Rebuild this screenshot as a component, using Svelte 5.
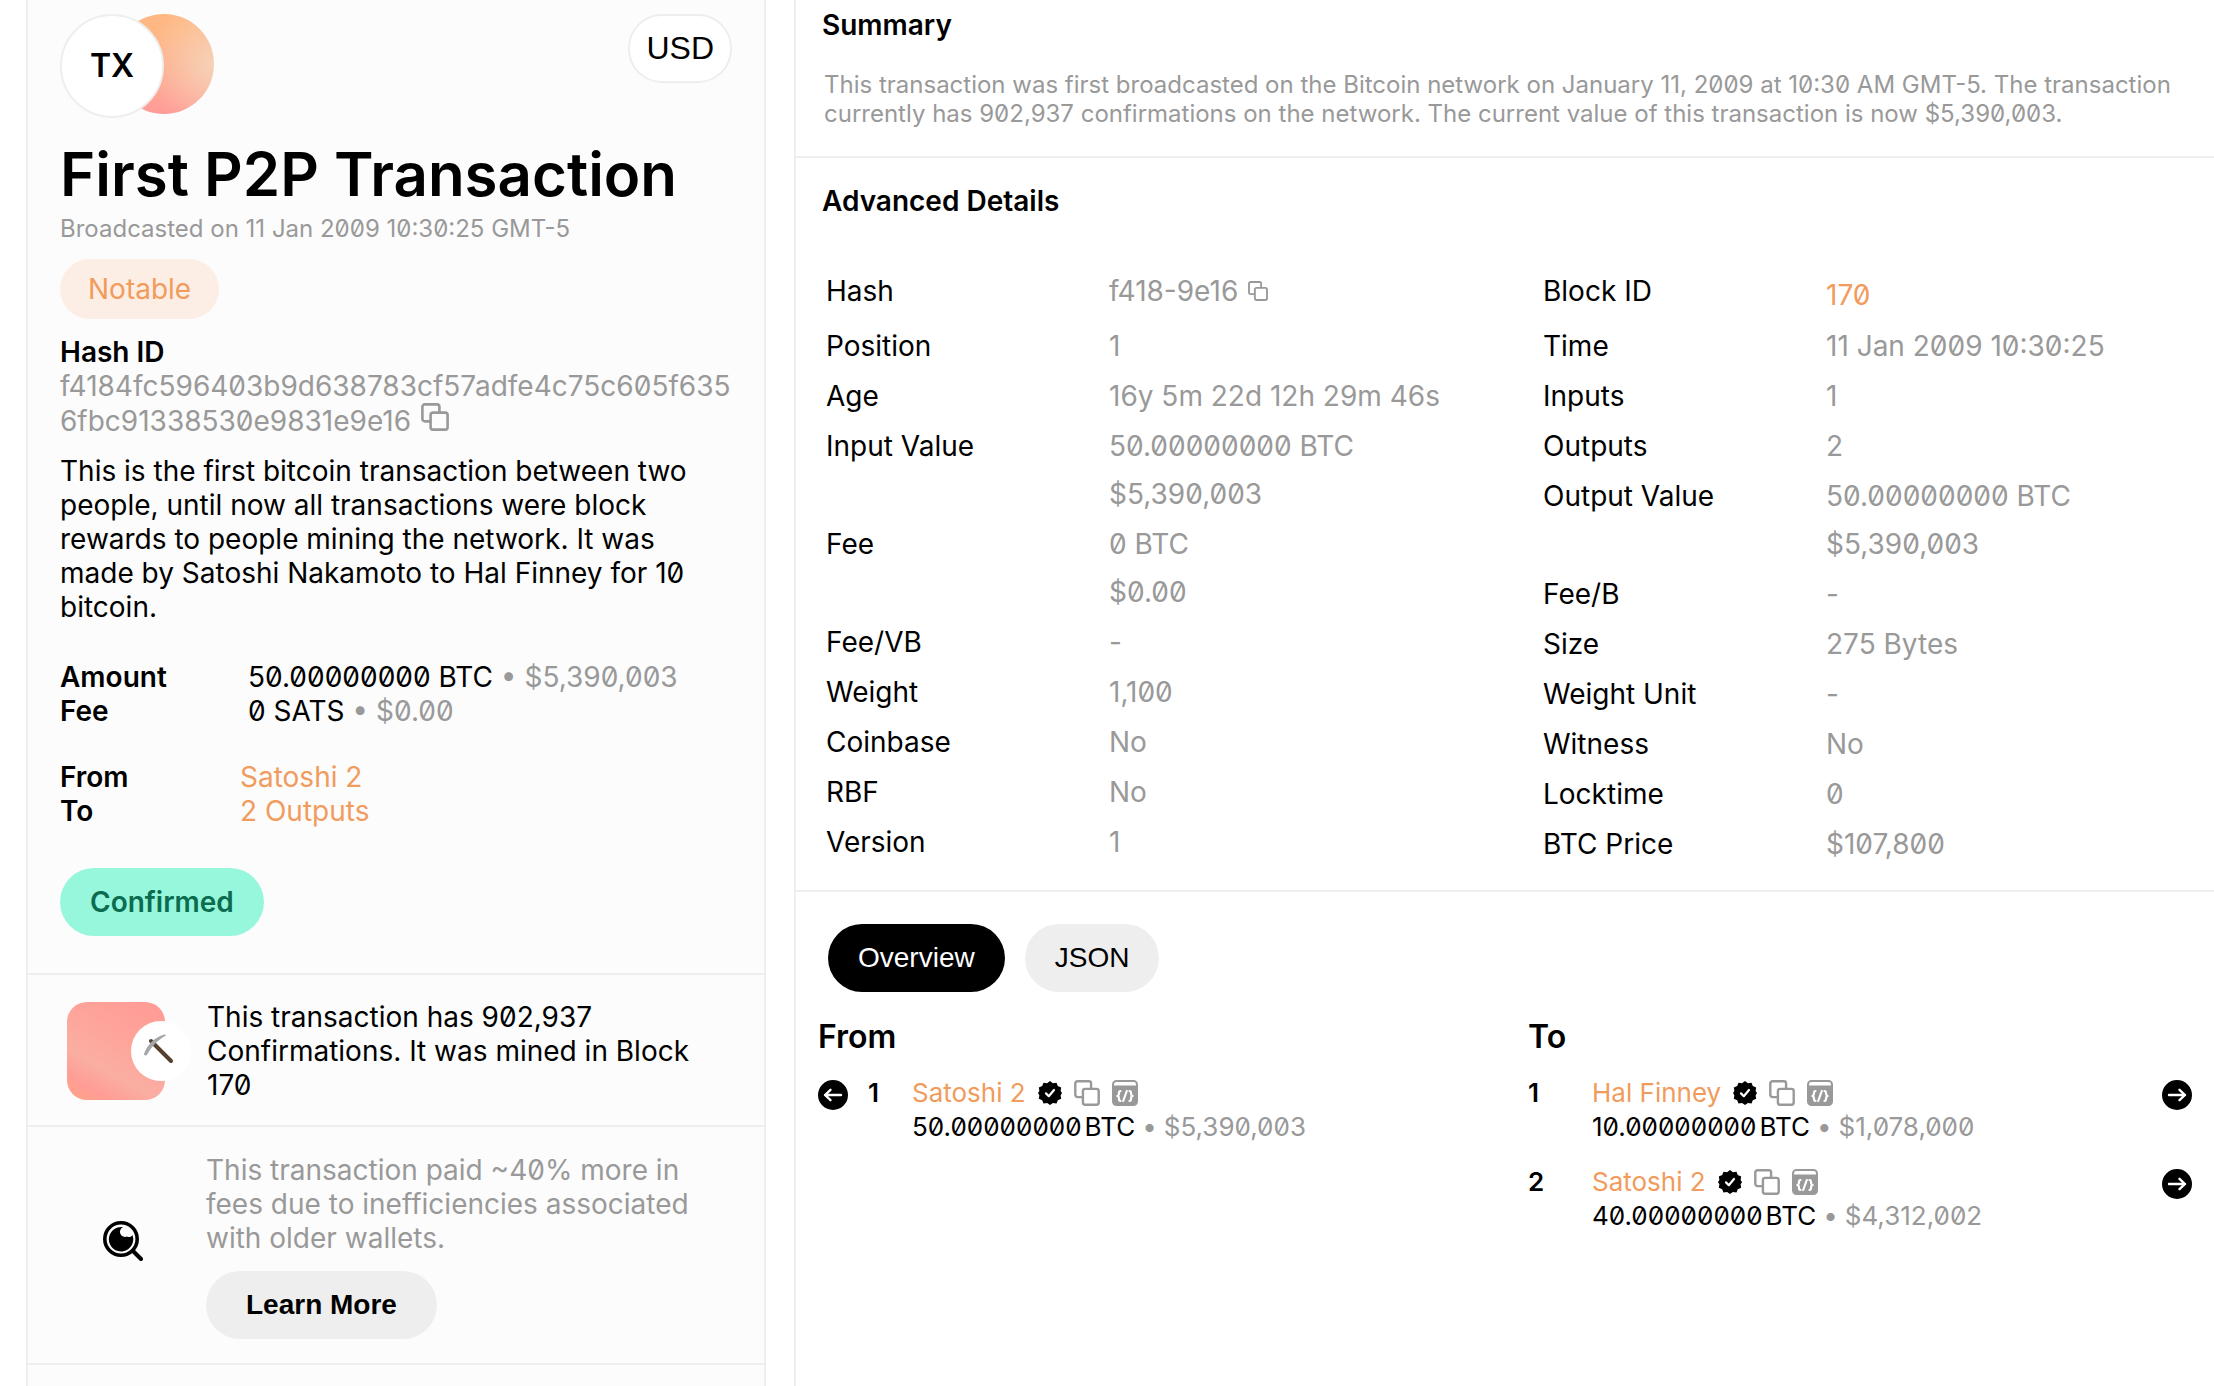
<script>
    let copied = $state('');
    let tab = $state('Overview');

    const hash = 'f4184fc596403b9d638783cf57adfe4c75c605f6356fbc91338530e9831e9e16';

    const leftDetails = [
        { label: 'Hash', values: ['f418-9e16'], copy: true },
        { label: 'Position', values: ['1'] },
        { label: 'Age', values: ['16y 5m 22d 12h 29m 46s'] },
        { label: 'Input Value', values: ['50.00000000 BTC', '$5,390,003'] },
        { label: 'Fee', values: ['0 BTC', '$0.00'] },
        { label: 'Fee/VB', values: ['-'] },
        { label: 'Weight', values: ['1,100'] },
        { label: 'Coinbase', values: ['No'] },
        { label: 'RBF', values: ['No'] },
        { label: 'Version', values: ['1'] }
    ];

    const rightDetails = [
        { label: 'Block ID', values: ['170'], link: true },
        { label: 'Time', values: ['11 Jan 2009 10:30:25'] },
        { label: 'Inputs', values: ['1'] },
        { label: 'Outputs', values: ['2'] },
        { label: 'Output Value', values: ['50.00000000 BTC', '$5,390,003'] },
        { label: 'Fee/B', values: ['-'] },
        { label: 'Size', values: ['275 Bytes'] },
        { label: 'Weight Unit', values: ['-'] },
        { label: 'Witness', values: ['No'] },
        { label: 'Locktime', values: ['0'] },
        { label: 'BTC Price', values: ['$107,800'] }
    ];

    const inputs = [{ name: 'Satoshi 2', btc: '50.00000000', usd: '$5,390,003' }];
    const outputs = [
        { name: 'Hal Finney', btc: '10.00000000', usd: '$1,078,000' },
        { name: 'Satoshi 2', btc: '40.00000000', usd: '$4,312,002' }
    ];

    function copyText(text) {
        navigator.clipboard?.writeText(text);
        copied = text;
    }
</script>

{#snippet copyIcon()}
    <svg class="copy-icon" viewBox="0 0 28 28" fill="none" stroke="currentColor" stroke-width="2.6" stroke-linejoin="round" aria-hidden="true">
        <rect x="9.6" y="9.6" width="17" height="17" rx="2.4" />
        <path d="M9.6 18.4H3.8a2.4 2.4 0 0 1-2.4-2.4V3.8a2.4 2.4 0 0 1 2.4-2.4H16a2.4 2.4 0 0 1 2.4 2.4v5.8" />
    </svg>
{/snippet}

{#snippet arrowIcon(flip)}
    <svg class="arrow-icon" class:flip viewBox="0 0 30 30" aria-hidden="true">
        <circle cx="15" cy="15" r="15" />
        <path d="M7 15h16M17.5 9.8l5.5 5.2-5.5 5.2" fill="none" stroke="#fff" stroke-width="2.4" stroke-linecap="round" stroke-linejoin="round" />
    </svg>
{/snippet}

{#snippet party(item)}
    <div class="party">
        <div class="party-name">
            <a href="#address">{item.name}</a>
            <svg class="badge-icon" viewBox="0 0 24 24" role="img" aria-label="Verified">
                <path d="M12 0l2.9 2.3 3.6-.6 1.3 3.4 3.4 1.3-.6 3.6L24 12l-1.4 2.6.6 3.2-3.4 1.4-1.3 3.3-3.6-.6L12 24l-2.9-2.1-3.6.6-1.3-3.3-3.4-1.4.6-3.2L0 12l1.4-2-.6-3.6 3.4-1.3 1.3-3.4 3.6.6z" />
                <path d="M8 12.4l2.8 2.8L16 9" fill="none" stroke="#fff" stroke-width="2.2" stroke-linecap="round" stroke-linejoin="round" />
            </svg>
            <button class="icon-button" aria-label="Copy address" onclick={() => copyText(item.name)}>{@render copyIcon()}</button>
            <svg class="code-icon" viewBox="0 0 26 26" aria-hidden="true">
                <path fill-rule="evenodd" d="M4.5 0h17A4.5 4.5 0 0 1 26 4.5v17a4.5 4.5 0 0 1-4.5 4.5h-17A4.5 4.5 0 0 1 0 21.5v-17A4.5 4.5 0 0 1 4.5 0zM4.4 2A2.4 2.4 0 0 0 2 4.4V5.5h22V4.4A2.4 2.4 0 0 0 21.6 2z" />
                <path d="M8.5 11q-1.5 0-1.5 2.2 0 2-1.2 2.8 1.2.8 1.2 2.8 0 2.2 1.5 2.2M17.5 11q1.5 0 1.5 2.2 0 2 1.2 2.8-1.2.8-1.2 2.8 0 2.2-1.5 2.2M14.8 11l-3.6 10" fill="none" stroke="#fff" stroke-width="2.2" stroke-linecap="round" />
            </svg>
        </div>
        <div class="party-amount"><span>{item.btc}</span><span class="unit">BTC</span><span class="dot">•</span><span class="muted">{item.usd}</span></div>
    </div>
{/snippet}

{#snippet detailList(rows)}
    <dl>
        {#each rows as row}
            <div class="detail" class:tall={row.copy || row.link} class:linked={row.link}>
                <dt>{row.label}</dt>
                <dd>
                    {#each row.values as value}
                        <div class="value">
                            {#if row.link}
                                <a href="#block">{value}</a>
                            {:else}
                                {value}
                            {/if}
                            {#if row.copy}
                                <button class="icon-button small" aria-label="Copy hash" onclick={() => copyText(hash)}>{@render copyIcon()}</button>
                            {/if}
                        </div>
                    {/each}
                </dd>
            </div>
        {/each}
    </dl>
{/snippet}

<div class="page">
    <aside>
        <section class="intro">
            <div class="top">
                <div class="avatar">
                    <span class="tx">TX</span>
                    <span class="sun"></span>
                </div>
                <button class="currency">USD</button>
            </div>
            <h1>First P2P Transaction</h1>
            <p class="date">Broadcasted on 11 Jan 2009 10:30:25 GMT-5</p>
            <span class="tag">Notable</span>
            <h2>Hash ID</h2>
            <p class="hash">{hash}
                <button class="icon-button" aria-label="Copy hash" onclick={() => copyText(hash)}>{@render copyIcon()}</button>
            </p>
            <p class="description">
                This is the first bitcoin transaction between two people, until now all transactions were block rewards
                to people mining the network. It was made by Satoshi Nakamoto to Hal Finney for 10 bitcoin.
            </p>
            <dl class="facts">
                <dt>Amount</dt>
                <dd>50.00000000 BTC <span class="muted">• $5,390,003</span></dd>
                <dt>Fee</dt>
                <dd>0 SATS <span class="muted">• $0.00</span></dd>
            </dl>
            <dl class="facts ends">
                <dt>From</dt>
                <dd><a href="#from">Satoshi 2</a></dd>
                <dt>To</dt>
                <dd><a href="#to">{outputs.length} Outputs</a></dd>
            </dl>
            <span class="status">Confirmed</span>
        </section>

        <section class="note">
            <div class="block">
                <span class="block-badge">
                    <svg viewBox="0 0 30 30" aria-hidden="true">
                        <path d="M7 7L27 27" stroke="#54402c" stroke-width="4" stroke-linecap="round" />
                        <path d="M0 20C3 11 10 3 20.5.4c1.4-.2 1.7 1 .7 1.6C14 6 8 12 3.2 20.5c-1 1.5-3.5 1-3.2-.5z" fill="#a5a7a8" />
                    </svg>
                </span>
            </div>
            <p>This transaction has 902,937 Confirmations. It was mined in Block 170</p>
        </section>

        <section class="note fee-note">
            <svg class="lens" viewBox="0 0 40 40" aria-hidden="true">
                <circle cx="18" cy="18" r="16.2" fill="none" stroke="#000" stroke-width="3.6" />
                <path d="M30 30l8 8" stroke="#000" stroke-width="4" stroke-linecap="round" />
                <path d="M20 6.2a5 5 0 0 0 4 9.3 4 4 0 0 0 5.5-1.5A12.2 12.2 0 1 1 20 6.2z" />
            </svg>
            <div>
                <p class="muted">This transaction paid ~40% more in fees due to inefficiencies associated with older wallets.</p>
                <button class="learn">Learn More</button>
            </div>
        </section>
    </aside>

    <main>
        <section class="summary">
            <h2>Summary</h2>
            <p>
                This transaction was first broadcasted on the Bitcoin network on January 11, 2009 at 10:30 AM GMT-5. The
                transaction currently has 902,937 confirmations on the network. The current value of this transaction is
                now $5,390,003.
            </p>
        </section>

        <section class="advanced">
            <h2>Advanced Details</h2>
            <div class="columns">
                {@render detailList(leftDetails)}
                {@render detailList(rightDetails)}
            </div>
        </section>

        <section class="flow">
            <div class="tabs">
                {#each ['Overview', 'JSON'] as name}
                    <button class:active={tab === name} onclick={() => (tab = name)}>{name}</button>
                {/each}
            </div>
            <div class="sides">
                <div>
                    <h3>From</h3>
                    {#each inputs as item, i}
                        <div class="row input">
                            {@render arrowIcon(true)}
                            <span class="index">{i + 1}</span>
                            {@render party(item)}
                        </div>
                    {/each}
                </div>
                <div>
                    <h3>To</h3>
                    {#each outputs as item, i}
                        <div class="row">
                            <span class="index">{i + 1}</span>
                            {@render party(item)}
                            {@render arrowIcon(false)}
                        </div>
                    {/each}
                </div>
            </div>
        </section>
    </main>
</div>

<style>
    :global(body) {
        background: #fff;
        color: #000;
        font: 28px/34px Inter, "Liberation Sans", sans-serif;
        font-feature-settings: "zero";
    }
    .page {
        display: flex;
        gap: 28px;
        min-height: 100vh;
        padding-left: 26px;
        overflow: hidden;
    }
    .page * {
        box-sizing: border-box;
    }
    h1, h2, h3, p, dl, dd {
        margin: 0;
    }
    h2 {
        font-size: 28px;
        line-height: 34px;
        font-weight: 600;
    }
    a {
        color: #f19b5c;
        text-decoration: none;
    }
    button {
        border: none;
        padding: 0;
        color: inherit;
        font: 28px "Liberation Sans", Arial, sans-serif;
        cursor: pointer;
    }
    svg {
        display: block;
        flex: none;
    }
    .muted {
        color: #999;
    }

    /* left panel */
    aside {
        flex: 0 0 740px;
        border: solid #eee;
        border-width: 0 2px;
        background: #fcfcfc;
    }
    aside section {
        border-bottom: 2px solid #eee;
    }
    .intro {
        padding: 14px 32px 37px;
    }
    .top {
        display: flex;
        justify-content: space-between;
        align-items: flex-start;
    }
    .avatar {
        display: flex;
        align-items: flex-start;
    }
    .tx {
        z-index: 1;
        display: flex;
        align-items: center;
        justify-content: center;
        width: 104px;
        height: 104px;
        border: 2px solid #eee;
        border-radius: 50%;
        background: #fff;
        font-size: 32px;
        font-weight: 600;
    }
    .sun {
        width: 100px;
        height: 100px;
        margin-left: -50px;
        border-radius: 50%;
        background: radial-gradient(circle at 100% 50%, #f6d3b8 0, transparent 60%), linear-gradient(#ffb784 20%, #ff9c98);
    }
    .currency {
        height: 69px;
        padding: 0 16px;
        border: 2px solid #eee;
        border-radius: 34px;
        background: #fff;
        font-size: 32px;
    }
    h1 {
        margin-top: 19px;
        font-size: 60px;
        line-height: 74px;
        font-weight: 600;
        white-space: nowrap;
    }
    .date {
        margin-top: 3px;
        color: #999;
        font-size: 24px;
        line-height: 30px;
    }
    .tag {
        display: inline-flex;
        align-items: center;
        height: 60px;
        margin-top: 15px;
        padding: 0 28px;
        border-radius: 30px;
        background: #fceee4;
        color: #f19b5c;
    }
    .intro h2 {
        margin-top: 16px;
    }
    .hash {
        color: #999;
        overflow-wrap: anywhere;
    }
    .icon-button {
        display: inline-flex;
        background: none;
        color: #999;
    }
    .hash .icon-button {
        margin-left: 2px;
    }
    .copy-icon {
        width: 28px;
        height: 28px;
    }
    .description {
        margin-top: 16px;
    }
    .facts {
        display: grid;
        grid-template-columns: 188px 1fr;
        margin-top: 36px;
    }
    .facts dt {
        font-weight: 600;
    }
    .facts.ends {
        grid-template-columns: 180px 1fr;
        margin-top: 32px;
    }
    .status {
        display: inline-flex;
        align-items: center;
        height: 68px;
        margin-top: 40px;
        padding: 0 30px;
        border-radius: 34px;
        background: #96f7dc;
        color: #0c6c50;
        font-weight: 600;
    }

    .note {
        display: grid;
        grid-template-columns: 98px 1fr;
        align-items: center;
        column-gap: 42px;
        padding: 25px 60px 23px 39px;
    }
    .block {
        display: flex;
        align-items: center;
        height: 98px;
        border-radius: 20px;
        background: linear-gradient(30deg, #ffa585, #ff9d95 16%, #faaea2 34%, #ffa399 65%, #ff9a94);
    }
    .block-badge {
        display: flex;
        align-items: center;
        justify-content: center;
        flex: none;
        width: 60px;
        height: 60px;
        margin-left: 64px;
        padding: 0 4px 4px 0;
        border-radius: 50%;
        background: #fff;
    }
    .block-badge svg {
        width: 30px;
        height: 30px;
    }
    .fee-note {
        column-gap: 41px;
        padding: 26px 60px 24px 39px;
    }
    .lens {
        width: 40px;
        height: 40px;
        margin: 0 0 10px 36px;
    }
    .learn {
        height: 68px;
        margin-top: 16px;
        padding: 0 40px;
        border-radius: 34px;
        background: #eee;
        font-weight: 700;
    }

    /* right panel */
    main {
        flex: 1;
        min-width: 0;
        border-left: 2px solid #eee;
    }
    .summary, .advanced {
        border-bottom: 2px solid #eee;
    }
    .summary {
        padding: 8px 26px 28px;
    }
    .summary p {
        margin-top: 28px;
        padding-left: 2px;
        color: #999;
        font-size: 24px;
        line-height: 29px;
    }
    .advanced {
        padding: 26px 0 21px 26px;
    }
    .columns {
        display: grid;
        grid-template-columns: 1fr 1fr;
        column-gap: 46px;
        margin-top: 48px;
        padding-left: 4px;
    }
    .detail {
        display: grid;
        grid-template-columns: 283px 1fr;
        padding: 8px 0;
    }
    .tall {
        min-height: 55px;
    }
    .linked dd {
        padding-top: 4px;
    }
    .value {
        display: flex;
        align-items: center;
        color: #999;
    }
    .value + .value {
        margin-top: 14px;
    }
    .small {
        margin-left: 10px;
    }
    .small .copy-icon {
        width: 20px;
        height: 20px;
    }

    .flow {
        padding: 32px 22px;
    }
    .tabs {
        display: flex;
        gap: 20px;
        padding-left: 10px;
    }
    .tabs button {
        height: 68px;
        padding: 0 30px;
        border-radius: 34px;
        background: #eee;
    }
    .tabs .active {
        background: #000;
        color: #fff;
    }
    .sides {
        display: grid;
        grid-template-columns: 1fr 1fr;
        column-gap: 46px;
        margin-top: 25px;
    }
    h3 {
        font-size: 32px;
        line-height: 40px;
        font-weight: 600;
    }
    .row {
        display: flex;
        align-items: flex-start;
        margin-top: 19px;
        font-size: 26px;
    }
    .row + .row {
        margin-top: 21px;
    }
    .index {
        width: 64px;
        font-weight: 600;
    }
    .input .index {
        width: 44px;
        margin-left: 20px;
    }
    .arrow-icon {
        width: 30px;
        height: 30px;
        margin-top: 4px;
    }
    .flip {
        transform: scaleX(-1);
    }
    .party {
        flex: 1;
    }
    .party-name {
        display: flex;
        align-items: center;
        gap: 12px;
    }
    .party-name .copy-icon {
        width: 26px;
        height: 26px;
    }
    .badge-icon {
        width: 24px;
        height: 24px;
    }
    .code-icon {
        width: 26px;
        height: 26px;
        fill: #999;
    }
    .unit {
        margin-left: 3px;
    }
    .dot {
        margin: 0 7px;
        color: #999;
    }
</style>
